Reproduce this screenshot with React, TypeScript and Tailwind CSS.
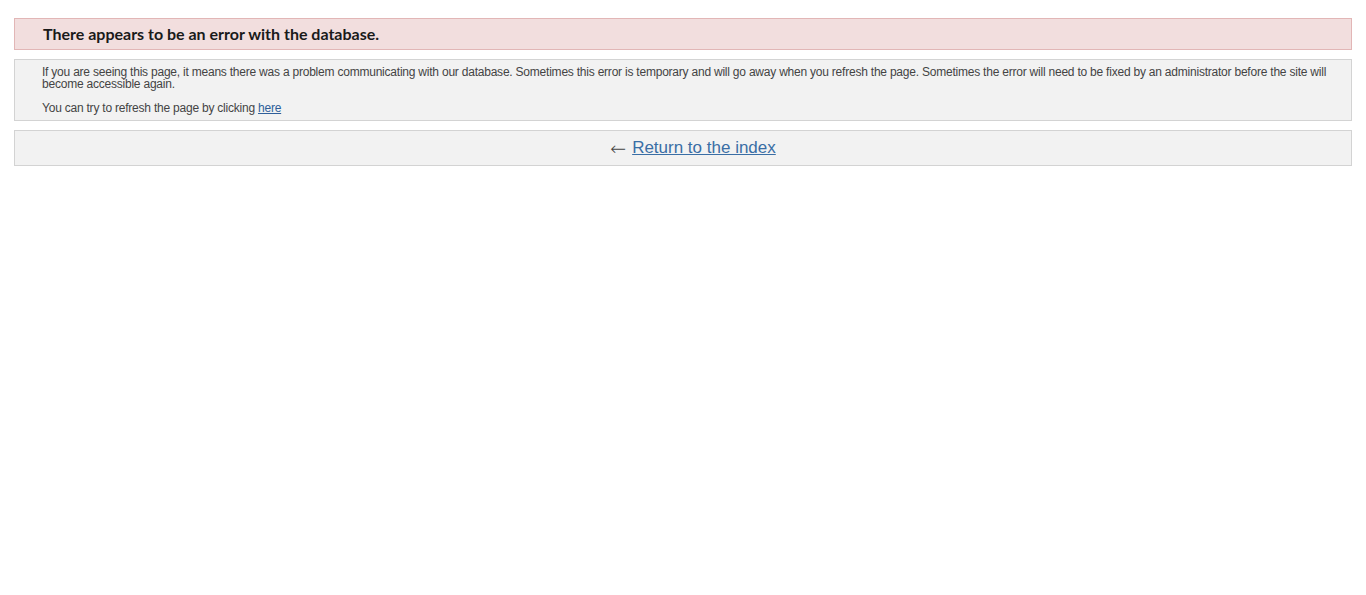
import React from 'react';

export default function App() {
  return (
    <div className="min-h-screen bg-white px-[14px] pt-[18px] font-['Liberation_Sans',Arial,sans-serif]">
      <div className="h-[32px] flex items-center border border-[#e2b6b6] bg-[#f2dede] pl-[28px]">
        <h1 className="font-['Lato','Open_Sans',sans-serif] text-[16px] font-bold text-[#1a1a1a]">
          There appears to be an error with the database.
        </h1>
      </div>

      <div className="mt-[9px] border border-[#d3d3d3] bg-[#f2f2f2] pl-[27px] pr-[20px] pt-[6px] pb-[6px] text-[12px] leading-[12px] tracking-[-0.22px] text-[#444]">
        <p>
          If you are seeing this page, it means there was a problem communicating with our database. Sometimes this error is temporary and will go away when you refresh the page. Sometimes the error will need to be fixed by an administrator before the site will become accessible again.
        </p>
        <p className="mt-[12px]">
          You can try to refresh the page by clicking{' '}
          <a href="#" className="text-[#2f5f9a] underline">here</a>
        </p>
      </div>

      <div className="mt-[9px] h-[36px] flex items-center justify-center border border-[#d3d3d3] bg-[#f2f2f2] pl-[20px] text-[17px] text-[#444]">
        <span className="font-['DejaVu_Sans',sans-serif] text-[19px] leading-none font-light mr-[6px]">←</span>
        <a href="#" className="text-[#3a6ea5] underline">Return to the index</a>
      </div>
    </div>
  );
}
